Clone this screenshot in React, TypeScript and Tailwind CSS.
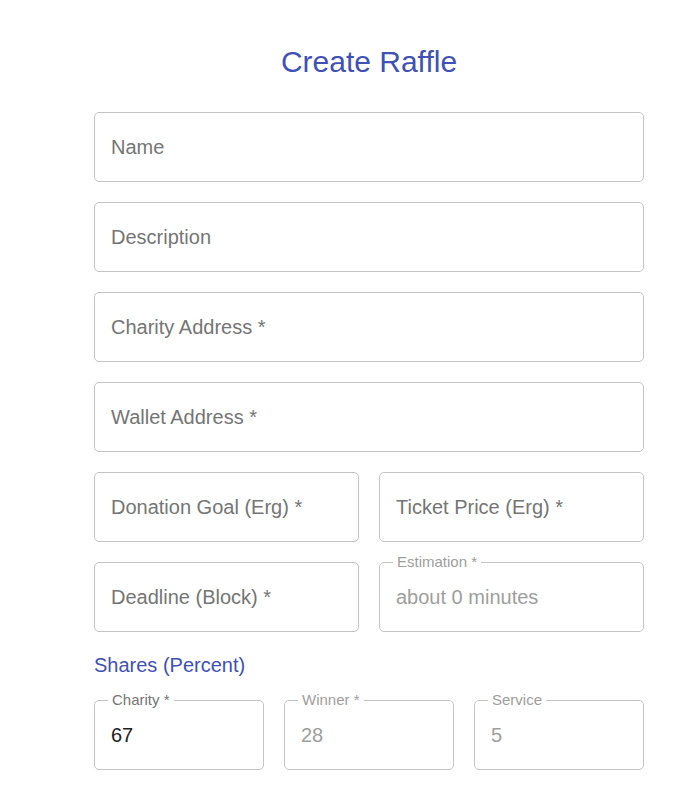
import React from 'react';

type FieldProps = {
  label: string;
  value?: string;
  disabled?: boolean;
};

const font = { fontFamily: '"Liberation Sans", Arial, sans-serif' };

// outlined text field, label inside when empty, notched when it has a value
const Field: React.FC<FieldProps> = ({ label, value, disabled }) => {
  const hasValue = value !== undefined;
  return (
    <div className="relative h-[70px] rounded-[5px] border border-[#c4c4c4] flex items-center px-[16px]">
      {hasValue ? (
        <>
          <span
            className={`absolute -top-[10px] left-[13px] bg-white px-[4px] text-[15px] leading-[18px] ${
              disabled ? 'text-[#9e9e9e]' : 'text-[#757575]'
            }`}
          >
            {label}
          </span>
          <span className={`text-[20px] ${disabled ? 'text-[#9e9e9e]' : 'text-[#212121]'}`}>{value}</span>
        </>
      ) : (
        <span className="text-[20px] text-[#757575]">{label}</span>
      )}
    </div>
  );
};

export default function App() {
  return (
    <div className="min-h-screen bg-white" style={font}>
      <div className="w-[550px] ml-[94px] pt-[42px] pb-[26px]">
        <h1 className="text-[30px] leading-[40px] text-center text-[#3f51b5] mb-[30px]">Create Raffle</h1>

        <div className="flex flex-col gap-[20px]">
          <Field label="Name" />
          <Field label="Description" />
          <Field label="Charity Address *" />
          <Field label="Wallet Address *" />
          <div className="grid grid-cols-2 gap-[20px]">
            <Field label="Donation Goal (Erg) *" />
            <Field label="Ticket Price (Erg) *" />
          </div>
          <div className="grid grid-cols-2 gap-[20px]">
            <Field label="Deadline (Block) *" />
            <Field label="Estimation *" value="about 0 minutes" disabled />
          </div>
        </div>

        <h2 className="text-[20px] leading-[28px] text-[#3f51b5] mt-[19px] mb-[21px]">Shares (Percent)</h2>

        <div className="grid grid-cols-3 gap-[20px]">
          <Field label="Charity *" value="67" />
          <Field label="Winner *" value="28" disabled />
          <Field label="Service" value="5" disabled />
        </div>
      </div>
    </div>
  );
}
